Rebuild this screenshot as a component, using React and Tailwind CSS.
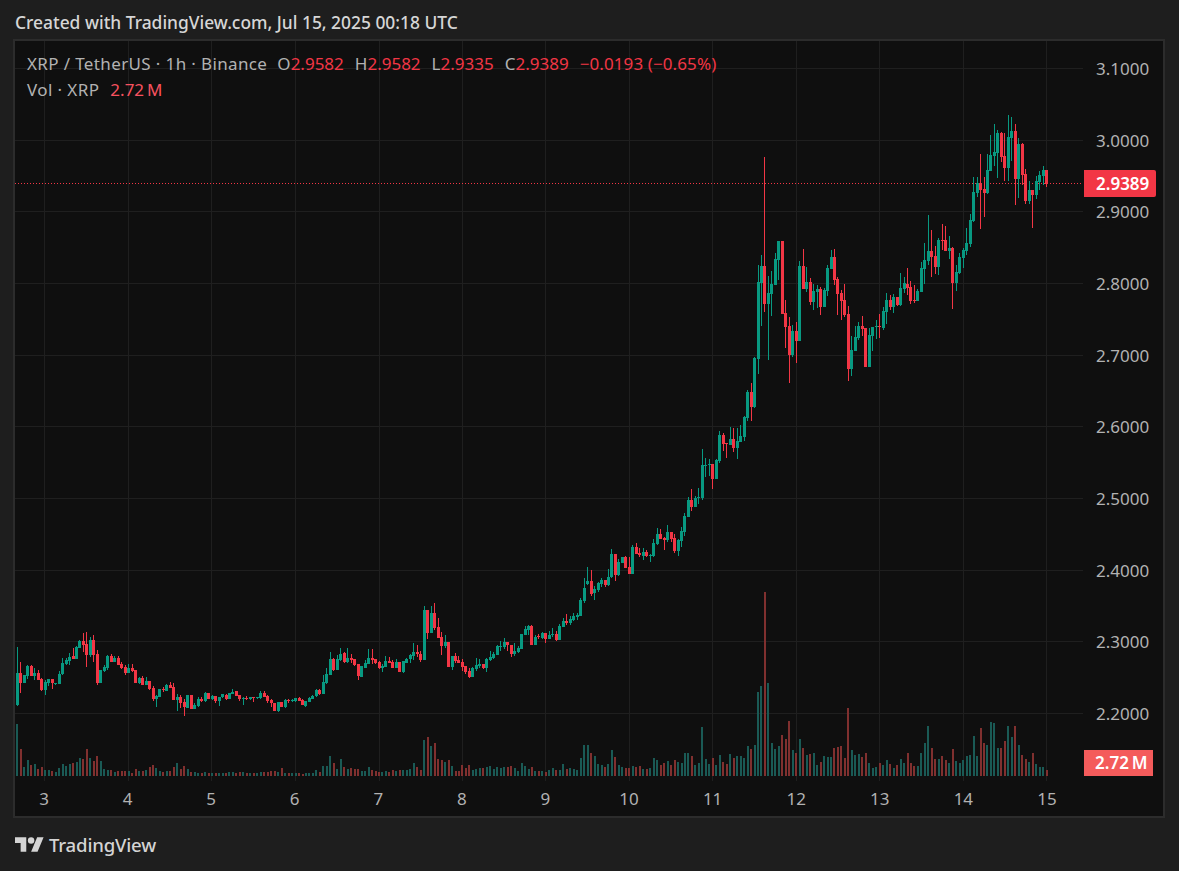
const A = [
[1,160,255,80,257],[0,160,188,127,218],[1,166,188,166,188],[1,138,168,135,178],[0,138,168,135,168],[1,160,168,145,180],[0,160,180,150,180],[0,178,210,175,212],[1,186,210,180,225],[1,178,190,178,197],
[0,178,190,178,207],[1,190,192,188,194],[1,162,192,153,192],[1,128,162,115,165],[1,120,132,115,135],[1,110,122,100,135],[0,108,116,85,118],[1,82,117,78,117],[1,63,83,60,85],[0,63,75,40,95],
[0,73,105,37,140],[1,60,105,50,110],[0,60,105,45,125],[0,103,188,90,195],[1,150,188,150,190],[1,140,152,135,155],[1,108,145,105,150],[0,108,127,102,127],[1,114,125,108,125],[0,114,135,108,135],
[0,133,145,125,148],[0,140,160,135,165],[1,144,158,132,160],[0,144,152,132,155],[0,150,190,150,190],[1,175,188,170,192],[0,173,194,168,194],[1,183,194,170,194],[0,183,207,183,210],[0,205,237,198,242],
[1,228,237,225,260],[1,207,230,207,232],[0,207,209,200,215],[1,195,212,192,214],[0,195,203,187,205],[0,202,240,188,240],[1,232,240,222,272],[0,232,250,225,265],[0,245,260,238,287],[1,225,265,225,265],
[0,225,266,225,266],[1,255,266,250,266],[1,238,258,232,262],[0,238,243,232,246],[1,218,243,215,245],[0,220,236,220,236],[1,228,236,225,240],[0,228,244,228,248],[1,232,242,230,258],[1,222,232,222,234],
[0,224,236,222,240],[1,220,236,218,238],[1,215,221,208,223],[0,213,228,213,228],[0,226,236,224,242],[1,234,237,232,255],[0,234,236,228,240],[1,232,236,232,240],[0,232,234,232,245],[1,232,234,230,236],
[1,218,234,212,238],[0,218,230,212,232],[0,228,244,226,248],[0,240,250,238,262],[0,250,272,248,272],[1,247,273,247,275],[0,246,261,246,262],[1,240,261,238,263],[0,240,242,238,248],[1,240,244,238,246],
[1,235,244,233,246],[0,235,242,232,244],[0,240,254,238,256],[1,243,257,243,260],[1,235,245,232,246],[1,228,236,226,238],[1,210,228,208,230],[0,210,222,208,224],[1,185,222,165,222],[1,162,190,145,192],
[1,118,165,97,165],[0,118,150,115,152],[1,118,150,105,150],[1,102,120,85,122],[0,98,125,95,130],[1,113,125,85,128],
];
const B = [
[0,205,210,192,220],[0,207,226,207,228],[0,222,258,222,270],[1,228,261,228,261],[1,220,235,210,235],[1,204,222,178,222],[0,204,209,177,222],[0,207,220,207,222],[0,215,235,213,237],[1,228,233,222,246],
[1,213,232,198,232],[0,213,218,202,218],[0,215,233,210,235],[1,216,233,208,233],[0,216,246,216,246],[1,213,246,213,249],[1,207,218,203,220],[1,195,208,192,220],[1,186,198,160,210],[0,186,191,166,200],
[0,192,210,184,215],[1,60,210,48,210],[0,60,128,60,147],[1,70,128,48,128],[0,69,115,40,120],[0,112,143,85,143],[0,142,168,127,195],[1,156,168,135,173],[0,156,231,156,231],[1,198,231,198,240],
[0,198,212,190,220],[0,210,218,198,220],[0,216,232,208,243],[0,228,247,228,252],[0,243,261,235,264],[1,234,261,230,261],[1,225,236,205,243],[1,222,228,208,233],[0,222,234,222,238],[1,207,234,204,246],
[1,202,210,183,213],[1,192,204,185,206],[1,168,195,165,195],[1,168,170,153,182],[1,155,170,145,178],[0,155,165,155,183],[0,165,192,165,200],[1,183,192,160,198],[1,175,187,168,190],[1,132,177,132,177],
[1,117,135,108,135],[1,108,120,104,135],[0,108,165,105,165],[1,141,165,135,165],[0,138,141,132,147],[1,128,144,125,147],[0,130,147,130,159],[1,135,147,123,147],[1,132,135,114,140],[0,132,150,123,153],
[1,108,150,102,150],[1,93,111,85,111],[0,93,99,72,105],[1,87,100,78,105],[1,78,90,70,93],[1,75,80,68,90],[1,30,78,24,78],[1,-5,33,-35,38],
];
const C = [
[1,603,612,560,615],[0,604,642,570,647],[1,628,638,618,660],[1,608,630,605,635],[1,600,612,595,620],[0,600,615,600,620],[1,592,615,568,617],[1,522,592,507,595],[0,522,585,522,602],[1,545,585,537,587],
[1,531,548,531,548],[0,531,563,529,563],[0,561,581,530,581],[1,500,581,495,581],[0,500,522,489,522],[0,520,526,505,532],[1,516,528,505,540],[0,516,528,510,530],[1,525,528,522,545],[1,488,528,477,530],
[1,462,491,445,494],[0,462,477,447,477],[0,473,480,470,510],[1,456,480,435,487],[0,456,476,456,486],[0,474,513,462,518],[1,480,513,477,527],[1,453,483,441,500],[1,408,456,400,468],[1,360,411,351,411],
[0,360,381,327,392],[1,354,381,348,381],[1,351,353,325,372],[1,255,354,207,360],[1,255,257,235,290],[1,252,255,237,287],[0,252,297,252,327],[1,240,297,237,297],[1,165,243,153,249],[0,165,192,159,213],
[0,190,192,190,233],[1,177,195,141,195],[0,177,204,144,216],[1,183,204,144,237],[1,168,186,135,186],[1,111,171,108,183],[1,36,114,30,123],[0,36,81,9,123],[1,-66,81,-70,84],
];
const D = [
[1,427,657,375,702],[1,378,430,345,558],[0,378,491,51,516],[1,459,491,408,660],[1,432,462,393,528],[1,357,435,339,435],[1,303,360,303,420],[0,303,522,303,522],[0,519,561,480,624],[0,558,645,531,729],
[1,573,645,555,651],[0,573,603,546,669],[1,378,603,363,603],[0,378,447,327,447],[1,426,447,381,456],[0,426,486,414,495],[1,453,486,432,510],[1,447,456,435,504],[0,447,501,441,525],[1,450,501,444,501],
[1,384,453,375,468],[1,351,387,330,387],[0,351,420,327,435],[0,417,462,411,525],[0,459,483,450,540],[0,480,525,432,531],[0,522,687,498,723],[1,630,687,588,708],[1,591,633,558,633],[1,558,594,546,600],
[0,558,567,528,588],[0,564,681,564,681],[1,585,681,564,681],[1,561,588,561,633],[1,558,562,540,597],[0,558,561,522,594],[1,513,564,501,570],[1,480,516,459,552],[0,480,501,465,510],[1,471,501,462,519],
[0,471,495,471,498],[1,444,496,399,498],[1,429,447,411,459],[0,432,444,384,465],[0,441,483,423,492],[0,480,483,435,489],[1,453,483,447,483],[1,384,456,366,456],[1,360,387,309,432],[1,333,363,225,375],
[0,333,351,270,411],[0,348,381,318,402],[1,300,381,294,405],[0,300,303,252,330],[0,300,333,258,333],
];
const E = [
[1,129,138,93,162],[0,129,234,126,312],[1,201,234,180,258],[1,156,204,144,207],[1,135,159,129,189],[1,114,138,69,150],[1,45,117,27,126],
];
const F = [
[1,246,332,200,335],[1,220,250,201,262],[0,220,240,132,357],[0,237,249,200,320],[1,180,249,132,252],[1,135,183,75,183],[1,126,138,42,168],[1,69,129,60,204],[0,69,141,66,156],[0,138,174,69,213],
[1,81,174,15,213],[1,63,84,21,153],[0,63,207,42,285],[1,102,207,84,264],[0,102,195,99,225],[0,192,273,177,282],[1,240,273,213,282],[0,240,255,240,354],[1,213,255,198,267],[1,195,216,183,240],
[1,180,198,168,225],[0,180,222,180,231],
];
const VOL = [
312,387,440,420,435,433,447,441,450,450,454,456,444,432,437,432,429,425,414,417,
387,414,424,408,424,447,450,450,456,453,453,453,453,459,447,453,453,450,440,435,
444,453,456,453,453,441,429,447,438,447,456,456,459,459,456,459,459,459,459,459,
459,456,456,458,456,456,459,459,459,459,456,456,456,453,453,456,444,459,459,459,
459,459,462,459,459,459,450,456,438,438,408,429,447,417,441,447,
].map((t) => 620 + t / 3).concat([
534,537,537,543,543,531,540,543,546,546,543,546,540,543,540,540,540,537,519,531,
540,450,441,468,459,507,510,516,510,528,543,543,525,534,525,540,537,534,534,531,
528,537,531,534,531,531,528,534,543,519,528,537,531,543,543,543,546,540,534,540,
540,522,537,534,537,540,504,465,465,489,498,522,525,531,522,480,501,525,531,534,
534,528,531,528,537,537,534,504,510,525,519,513,525,510,516,519,489,489,498,525,519,
].map((t) => 590 + t / 3)).concat([
441,537,552,534,555,525,546,552,522,534,528,528,534,498,507,495,336,318,36,309,
489,507,498,465,477,423,510,519,477,504,525,522,519,555,546,528,531,531,504,501,
498,534,384,510,525,522,531,519,549,564,561,549,555,540,552,564,555,537,549,519,
549,558,558,519,489,438,504,537,537,528,540,549,507,543,549,540,528,525,468,528,
444,489,495,426,429,504,504,483,438,471,438,495,525,537,546,519,552,561,561,570,
].map((t) => 580 + t / 3));

const toPx = (rows, base) => rows.map(([up, t, b, h, l]) => ({ up, t: base + t / 3, b: base + b / 3, h: base + h / 3, l: base + l / 3 }));
const CANDLES = [...toPx(A, 620), ...toPx(B, 590), ...toPx(C, 380), ...toPx(D, 140), ...toPx(E, 205), ...toPx(F, 110)];

const VLINES = [44.5, 128.5, 211.5, 295.5, 379.5, 462.5, 545.5, 629.5, 712.5, 796.5, 879.5, 963.5, 1046.5];
const HLINES = [68.5, 140.5, 211.5, 283.5, 355.5, 426.5, 498.5, 570.5, 641.5, 713.5];
const PRICES = ["3.1000", "3.0000", "2.9000", "2.8000", "2.7000", "2.6000", "2.5000", "2.4000", "2.3000", "2.2000"];
const DAYS = ["3", "4", "5", "6", "7", "8", "9", "10", "11", "12", "13", "14", "15"];
const GREEN = "#089981";
const RED = "#f23645";

function Chart() {
  return (
    <svg width="1068" height="740" viewBox="15 41 1068 740" shapeRendering="crispEdges" className="block">
      {VLINES.map((x) => (
        <rect key={x} x={x - 0.5} y="41" width="1" height="740" fill="#1f1f1f" />
      ))}
      {HLINES.map((y) => (
        <rect key={y} x="15" y={y - 0.5} width="1068" height="1" fill="#1f1f1f" />
      ))}
      {CANDLES.map((c, i) => {
        const cx = 17.4 + 3.477 * i;
        return (
          <rect key={i} x={Math.round(cx - 1)} y={Math.round(VOL[i])} width="2" height={776 - Math.round(VOL[i])} fill={c.up ? "#1a5a55" : "#80302f"} />
        );
      })}
      <line x1="15" x2="1083" y1="183.5" y2="183.5" stroke={RED} strokeWidth="1" strokeDasharray="1 2" />
      {CANDLES.map((c, i) => {
        const cx = 17.4 + 3.477 * i;
        const fill = c.up ? GREEN : RED;
        const top = Math.round(c.t);
        const bh = Math.max(1, Math.round(c.b) - top);
        return (
          <g key={i} fill={fill}>
            <rect x={Math.round(cx - 0.5)} y={Math.round(c.h)} width="1" height={Math.max(1, Math.round(c.l) - Math.round(c.h))} />
            <rect x={Math.round(cx - 1.5)} y={top} width="3" height={bh} />
          </g>
        );
      })}
    </svg>
  );
}

function Legend() {
  return (
    <div className="absolute left-[12px] top-[10px] flex flex-col text-[17px] leading-[26px] text-[#b2b2b2] whitespace-nowrap">
      <div className="flex">
        <span className="tracking-[0.37px]">XRP / TetherUS · 1h · Binance</span>
        <span className="ml-[10px]">O<span className="text-[#f23645]">2.9582</span></span>
        <span className="ml-[11px]">H<span className="text-[#f23645]">2.9582</span></span>
        <span className="ml-[11px]">L<span className="text-[#f23645]">2.9335</span></span>
        <span className="ml-[11px]">C<span className="text-[#f23645]">2.9389</span></span>
        <span className="ml-[11px] text-[#f23645] tracking-[0.1px]">−0.0193 (−0.65%)</span>
      </div>
      <div className="flex">
        <span className="tracking-[0.4px]">Vol · XRP</span>
        <span className="ml-[11px] text-[#f7525f]">2.72&#8201;M</span>
      </div>
    </div>
  );
}

export default function App() {
  return (
    <div className="w-[1179px] h-[871px] bg-[#1e1e1e] flex flex-col overflow-hidden font-['Noto_Sans',sans-serif]">
      <div className="h-[39px] pl-[15px] pt-[5px] flex items-center text-[17.4px] font-medium text-[#d6d6d6] whitespace-nowrap">
        Created with TradingView.com, Jul 15, 2025 00:18 UTC
      </div>
      <div className="ml-[13px] w-[1152px] h-[779px] border-2 border-[#2c2c2c] bg-[#0f0f0f] grid grid-cols-[1068px_80px] grid-rows-[740px_35px]">
        <div className="relative overflow-hidden">
          <Chart />
          <Legend />
        </div>
        <div className="relative flex flex-col justify-between pl-[13px] pt-[18px] pb-[57px] text-[17px] leading-[20px] text-[#b2b2b2]">
          {PRICES.map((p) => (
            <span key={p}>{p}</span>
          ))}
          <div className="absolute left-[1px] top-[129px] w-[72px] h-[27px] bg-[#f23645] rounded-r-[2px] flex items-center pl-[12px] text-[17px] font-semibold text-white">
            2.9389
          </div>
          <div className="absolute left-[1px] top-[709px] w-[69px] h-[26px] bg-[#f45b5b] flex items-center pl-[11px] text-[17px] font-semibold text-white">
            2.72&#8201;M
          </div>
        </div>
        <div className="flex justify-between pl-[19px] pr-[26px] items-center text-[17px] text-[#b2b2b2]">
          {DAYS.map((d) => (
            <span key={d} className="w-[20px] text-center">{d}</span>
          ))}
        </div>
        <div />
      </div>
      <div className="flex items-center gap-[5px] pl-[15px] h-[53px]">
        <svg width="29" height="15" viewBox="0 4 36 18" fill="#d4d4d4" aria-hidden="true">
          <path d="M14 22H7V11H0V4h14v18zM28 22h-8l7.5-18h8L28 22z" />
          <circle cx="20" cy="8" r="4" />
        </svg>
        <span className="text-[18.6px] font-medium text-[#d4d4d4] tracking-[-0.2px]">TradingView</span>
      </div>
    </div>
  );
}
